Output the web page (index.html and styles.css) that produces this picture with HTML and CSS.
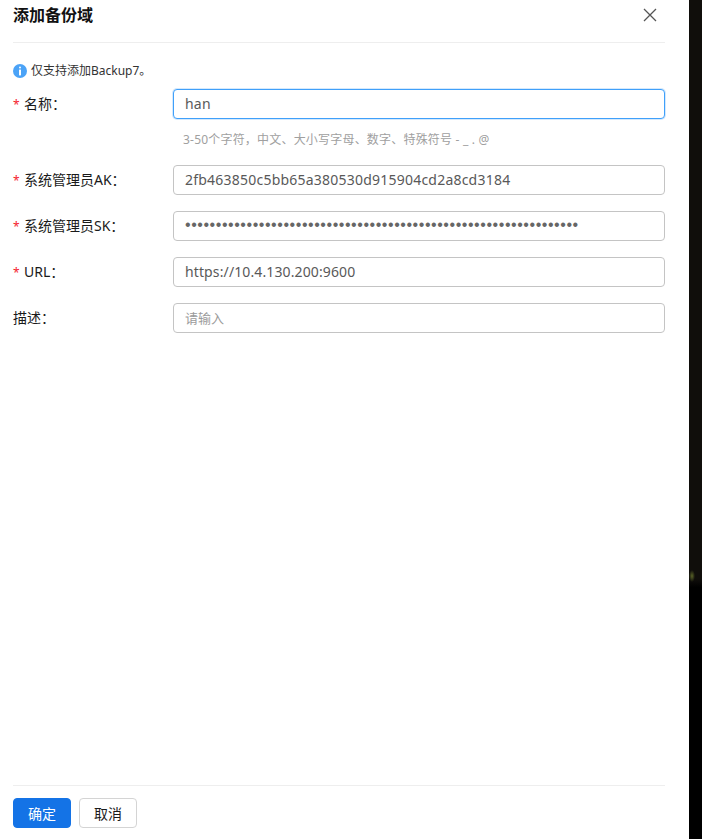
FILE: index.html
```html
<!DOCTYPE html>
<html lang="zh-CN">
<head>
<meta charset="utf-8">
<title>添加备份域</title>
<link rel="stylesheet" href="styles.css">
</head>
<body>
<div class="drawer">
  <header class="head">
    <h1 class="title">添加备份域</h1>
    <button class="close" type="button" aria-label="关闭">
      <svg width="14" height="14" viewBox="0 0 14 14"><path d="M1 1l12 12M13 1L1 13" fill="none" stroke="#555" stroke-width="1.3"/></svg>
    </button>
  </header>
  <main class="body">
    <p class="info">
      <svg class="info-icon" width="14" height="14" viewBox="0 0 14 14"><circle cx="7" cy="7" r="7" fill="#4ba3f7"/><rect x="6" y="2.6" width="2" height="2" rx="1" fill="#fff"/><rect x="6" y="5.6" width="2" height="5.8" fill="#fff"/></svg>
      <span>仅支持添加Backup7。</span>
    </p>
    <form class="form">
      <div class="row row-first">
        <label class="label"><span class="req">*</span>名称：</label>
        <div class="field">
          <input class="input input-focus" type="text" value="han">
          <div class="help">3-50个字符，中文、大小写字母、数字、特殊符号 - _ . @</div>
        </div>
      </div>
      <div class="row">
        <label class="label"><span class="req">*</span>系统管理员AK：</label>
        <div class="field"><input class="input" type="text" value="2fb463850c5bb65a380530d915904cd2a8cd3184"></div>
      </div>
      <div class="row">
        <label class="label"><span class="req">*</span>系统管理员SK：</label>
        <div class="field"><input class="input input-secret" type="password" value="aaaaaaaaaaaaaaaaaaaaaaaaaaaaaaaaaaaaaaaaaaaaaaaaaaaaaaaaaaaaaaaa"></div>
      </div>
      <div class="row">
        <label class="label"><span class="req">*</span>URL：</label>
        <div class="field"><input class="input input-url" type="text" value="https://10.4.130.200:9600"></div>
      </div>
      <div class="row">
        <label class="label">描述：</label>
        <div class="field"><input class="input input-small" type="text" placeholder="请输入"></div>
      </div>
    </form>
  </main>
  <footer class="foot">
    <button class="btn btn-primary" type="button">确定</button>
    <button class="btn" type="button">取消</button>
  </footer>
</div>
</body>
</html>
```
FILE: styles.css
```css
* { box-sizing: border-box; }
html, body { height: 100%; }
body {
  margin: 0;
  background:
    radial-gradient(ellipse 3px 6px at 692px 576px, #5a6428 0, transparent 100%),
    linear-gradient(#100e0b 0, #100e0b 69%, #000 70%);
  font-family: "Noto Sans", "Noto Sans CJK SC", sans-serif;
  color: #1a1a1a;
  overflow: hidden;
}
.drawer {
  width: 689px;
  height: 839px;
  padding: 0 24px 0 13px;
  background: #fff;
  display: flex;
  flex-direction: column;
}
.head {
  height: 43px;
  flex: none;
  display: flex;
  align-items: center;
  justify-content: space-between;
  border-bottom: 1px solid #eeeeee;
  padding-bottom: 13px;
}
.title {
  margin: 0;
  font-size: 16px;
  font-weight: 700;
  line-height: 30px;
  color: #111;
}
.close {
  padding: 0;
  margin-right: 8px;
  border: 0;
  background: none;
  display: flex;
}
.body { flex: 1; }
.info {
  margin: 21px 0 0;
  height: 14px;
  display: flex;
  align-items: center;
  gap: 4px;
  font-size: 12px;
  line-height: 14px;
  color: #333;
}
.info-icon { flex: none; }
.form {
  margin-top: 11px;
  display: flex;
  flex-direction: column;
  gap: 16px;
}
.row { display: flex; }
.label {
  width: 160px;
  height: 30px;
  flex: none;
  font-size: 14px;
  line-height: 30px;
  color: #1a1a1a;
}
.req {
  display: inline-block;
  width: 11px;
  color: #f5222d;
  font-size: 12px;
  line-height: 1;
}
.field { flex: 1; min-width: 0; }
.input {
  display: block;
  width: 100%;
  height: 30px;
  padding: 0 11px 2px;
  border: 1px solid #c4c4c4;
  border-radius: 4px;
  background: #fff;
  font-family: inherit;
  font-size: 14px;
  letter-spacing: 0.22px;
  color: #595959;
  outline: none;
}
.input-url { letter-spacing: 0.12px; }
.input-secret {
  font-family: "Liberation Sans", sans-serif;
  font-size: 16px;
  letter-spacing: 0.55px;
  color: #666;
}
.input-focus {
  border-color: #40a0fa;
  box-shadow: 0 0 0 1px #d4e9fd;
}
.input-small { padding-bottom: 0; font-size: 13px; letter-spacing: 0; }
.input::placeholder { color: #9b9b9b; opacity: 1; }
.help {
  margin: 13px 0 0 10px;
  height: 17px;
  font-size: 12px;
  line-height: 16px;
  letter-spacing: 0.2px;
  color: #a0a0a0;
}
.foot {
  height: 54px;
  flex: none;
  border-top: 1px solid #eeeeee;
  padding-top: 12px;
  display: flex;
  align-items: flex-start;
  gap: 8px;
}
.btn {
  width: 58px;
  height: 30px;
  padding: 0;
  border: 1px solid #d4d4d4;
  border-radius: 4px;
  background: #fff;
  font-family: inherit;
  font-size: 14px;
  color: #1a1a1a;
}
.btn-primary {
  border-color: #1473e6;
  background: #1473e6;
  color: #fff;
}
```
